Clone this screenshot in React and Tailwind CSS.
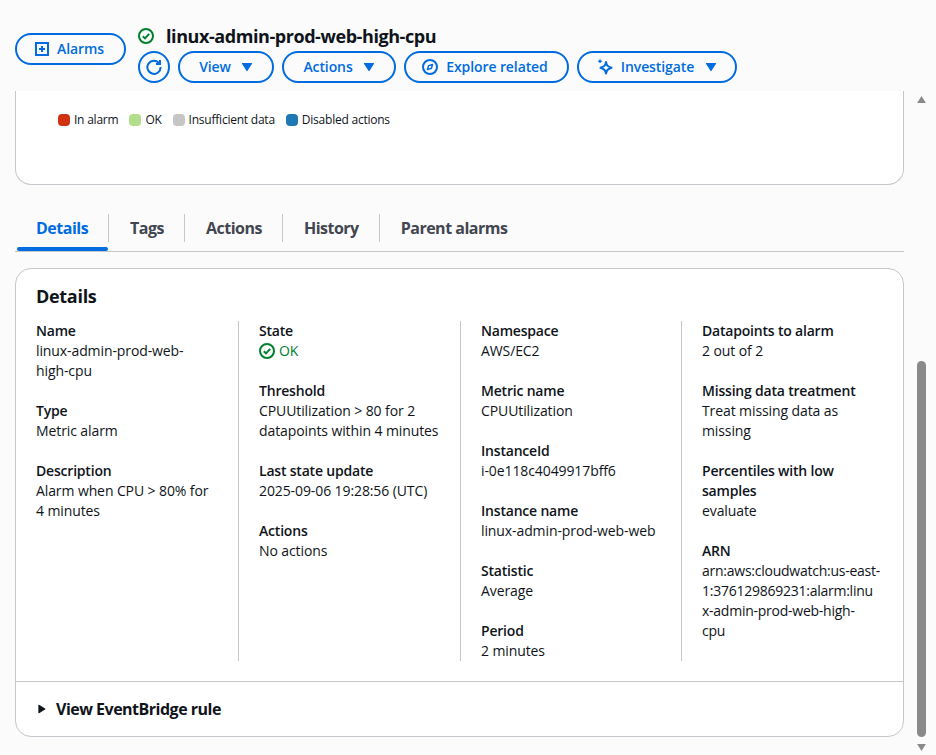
import React from 'react';

const Caret = () => (
  <svg viewBox="0 0 12 10" className="w-3 h-[10px]">
    <path d="M1.500 1.500h9L6 8.500z" fill="currentColor" stroke="currentColor" strokeWidth="1.200" strokeLinejoin="round" />
  </svg>
);

const OkIcon = () => (
  <svg viewBox="0 0 16 16" className="w-4 h-4 shrink-0" fill="none" stroke="#00802f" strokeWidth="2">
    <circle cx="8" cy="8" r="7" />
    <path d="M4.800 8.200l2.200 2.200 4.200-4.600" />
  </svg>
);

const PlusBox = () => (
  <svg viewBox="0 0 16 16" className="w-4 h-4" fill="none" stroke="currentColor" strokeWidth="2">
    <rect x="2" y="2" width="12" height="12" />
    <path d="M8 5v6M5 8h6" />
  </svg>
);

const Refresh = () => (
  <svg viewBox="0 0 16 16" className="w-4 h-4" fill="none" stroke="currentColor" strokeWidth="2">
    <path d="M13.500 4.600A6.600 6.600 0 1 0 14.600 8" />
    <path d="M14 1v4h-4" />
  </svg>
);

const Compass = () => (
  <svg viewBox="0 0 16 16" className="w-4 h-4" fill="none" stroke="currentColor" strokeWidth="2">
    <circle cx="8" cy="8" r="7" />
    <path d="M10.500 5.500L9.400 9.400 5.500 10.500 6.600 6.600z" strokeWidth="1.500" strokeLinejoin="round" />
  </svg>
);

const Sparkle = () => (
  <svg viewBox="0 0 16 16" className="w-4 h-4" fill="none" stroke="currentColor" strokeWidth="2">
    <path d="M9 3C9.600 6.300 10.400 7.300 14.500 8.800 10.400 10.300 9.600 11.300 9 14.500 8.400 11.300 7.600 10.300 3.500 8.800 7.600 7.300 8.400 6.300 9 3z" strokeLinejoin="round" />
    <path d="M3 0.500v3.500M1.250 2.250h3.500" strokeWidth="1.300" />
  </svg>
);

const Button = ({ children, className = '' }) => (
  <button className={`h-8 rounded-full border-2 border-[#006ce0] text-[#006ce0] text-sm font-semibold tracking-[-0.1px] flex items-center justify-center bg-transparent ${className}`}>
    {children}
  </button>
);

const Legend = ({ color, label }) => (
  <span className="flex items-center gap-[4px]">
    <span className={`w-3 h-3 rounded-[4px] ${color}`} />
    <span>{label}</span>
  </span>
);

const Field = ({ label, children }) => (
  <div>
    <div className="font-semibold tracking-[-0.2px]">{label}</div>
    <div className="tracking-[-0.1px]">{children}</div>
  </div>
);

const arn = (
  <span className="block whitespace-nowrap tracking-[-0.25px]">
    arn:aws:cloudwatch:us-east-<br />
    1:376129869231:alarm:linu<br />
    x-admin-prod-web-high-<br />
    cpu
  </span>
);

const columns = [
  [
    ['Name', 'linux-admin-prod-web-high-cpu'],
    ['Type', 'Metric alarm'],
    ['Description', 'Alarm when CPU > 80% for 4 minutes'],
  ],
  [
    ['State', <span key="ok" className="flex items-center gap-[4px] text-[#00802f]"><OkIcon />OK</span>],
    ['Threshold', 'CPUUtilization > 80 for 2 datapoints within 4 minutes'],
    ['Last state update', '2025-09-06 19:28:56 (UTC)'],
    ['Actions', 'No actions'],
  ],
  [
    ['Namespace', 'AWS/EC2'],
    ['Metric name', 'CPUUtilization'],
    ['InstanceId', 'i-0e118c4049917bff6'],
    ['Instance name', 'linux-admin-prod-web-web'],
    ['Statistic', 'Average'],
    ['Period', '2 minutes'],
  ],
  [
    ['Datapoints to alarm', '2 out of 2'],
    ['Missing data treatment', 'Treat missing data as missing'],
    ['Percentiles with low samples', 'evaluate'],
    ['ARN', arn],
  ],
];

const tabs = ['Details', 'Tags', 'Actions', 'History', 'Parent alarms'];

export default function App() {
  return (
    <div className="h-[755px] w-[936px] overflow-hidden flex flex-col bg-[#fbfbfb] text-[#0f141a] text-sm leading-5 font-['Open_Sans','Noto_Sans',sans-serif]">
      {/* sticky header */}
      <header className="h-[91px] shrink-0 flex pl-[15px] pt-[26px] gap-3">
        <Button className="w-[111px] mt-[7px] gap-[7px] pr-[3px]">
          <PlusBox />
          Alarms
        </Button>
        <div>
          <div className="h-[20px] flex items-center gap-3">
            <OkIcon />
            <h1 className="text-lg leading-5 font-bold tracking-[-0.43px]">linux-admin-prod-web-high-cpu</h1>
          </div>
          <div className="flex gap-2 mt-[5px]">
            <Button className="w-8"><Refresh /></Button>
            <Button className="w-[96px] gap-[10px]">View <Caret /></Button>
            <Button className="w-[114px] gap-[10px]">Actions <Caret /></Button>
            <Button className="w-[165px] gap-2 pr-[3px]"><Compass />Explore related</Button>
            <Button className="w-[160px] gap-2"><Sparkle />Investigate<span className="ml-[3px]"><Caret /></span></Button>
          </div>
        </div>
      </header>

      <div className="flex-1 flex min-h-0">
        <main className="w-[915px] pl-[15px] pr-[11px]">
          {/* chart card, scrolled under the header */}
          <section className="h-[94px] bg-white border border-t-0 border-[#c6c6cd] rounded-b-2xl pl-[42px] pt-[19px] flex items-start gap-[11px] text-xs leading-5 tracking-[-0.23px]">
            <Legend color="bg-[#d13212]" label="In alarm" />
            <Legend color="bg-[#b2dd8b]" label="OK" />
            <Legend color="bg-[#c6c6c6]" label="Insufficient data" />
            <Legend color="bg-[#1f78b4]" label="Disabled actions" />
          </section>

          {/* tabs */}
          <nav className="mt-[27px] h-[40px] pt-[2px] flex border-b border-[#c6c6cd] text-base font-bold tracking-[-0.5px] text-[#424650]">
            {tabs.map((tab, i) => (
              <div key={tab} className={`relative h-[28px] flex items-center pl-[21px] pr-[20px] ${i === 0 ? 'text-[#006ce0] w-[94px]' : ''} ${i < tabs.length - 1 ? 'border-r border-[#c6c6cd]' : ''}`}>
                {tab}
                {i === 0 && <span className="absolute left-[2px] right-0 top-[33px] h-1 rounded-full bg-[#006ce0]" />}
              </div>
            ))}
          </nav>

          {/* details card */}
          <section className="mt-4 h-[469px] bg-white border border-[#c6c6cd] rounded-2xl">
            <div className="h-[412px] px-5 pt-[16px]">
              <h2 className="text-lg leading-[23px] font-bold tracking-[-0.3px]">Details</h2>
              <div className="flex mt-[13px] h-[340px]">
                {columns.map((fields, i) => (
                  <div key={i} className={`flex flex-col shrink-0 gap-5 ${i === 0 ? 'w-[202px] pr-6' : i === 2 ? 'w-[221px] pl-[20px] pr-4 border-l border-[#c6c6cd]' : 'w-[222px] pl-[20px] pr-4 border-l border-[#c6c6cd]'}`}>
                    {fields.map(([label, value]) => (
                      <Field key={label} label={label}>{value}</Field>
                    ))}
                  </div>
                ))}
              </div>
            </div>
            <div className="border-t border-[#c6c6cd] h-[55px] pl-[22px] flex items-center gap-[10px] text-base font-bold tracking-[-0.5px]">
              <svg viewBox="0 0 10 12" className="w-2 h-[10px]"><path d="M1 1l8 5-8 5z" fill="currentColor" stroke="currentColor" strokeLinejoin="round" /></svg>
              View EventBridge rule
            </div>
          </section>
        </main>

        {/* scrollbar */}
        <aside className="w-[21px] pl-[2px] relative">
          <svg viewBox="0 0 10 8" className="w-[9px] h-[7px] mt-[5px] text-[#8a8a8a]"><path d="M5 0l5 8H0z" fill="currentColor" /></svg>
          <div className="absolute left-[2px] top-[270px] w-[9px] h-[376px] rounded-full bg-[#8a8a8a]" />
          <svg viewBox="0 0 10 8" className="absolute bottom-[4px] left-[2px] w-[9px] h-[7px] text-[#8a8a8a]"><path d="M0 0h10L5 8z" fill="currentColor" /></svg>
        </aside>
      </div>
    </div>
  );
}
